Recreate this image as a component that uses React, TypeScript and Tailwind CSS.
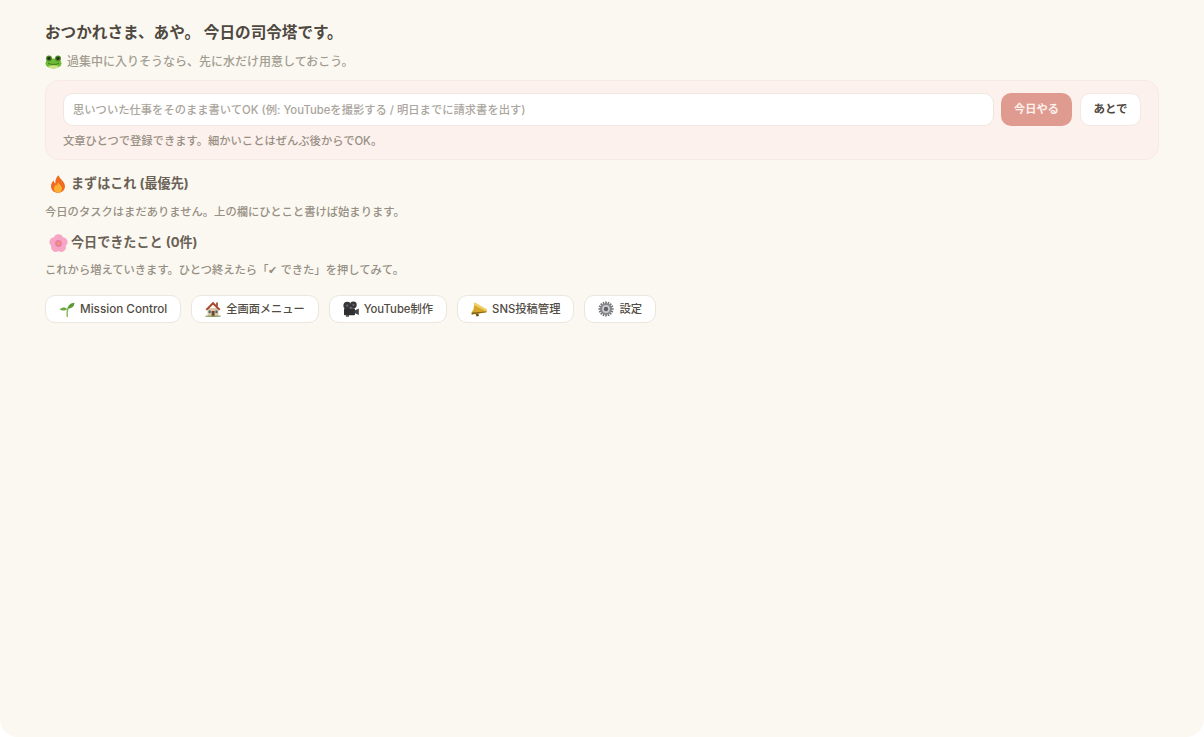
const sans = "font-['Inter','Noto_Sans_CJK_JP',sans-serif]";

function Sprout() {
  return (
    <svg width="16" height="16" viewBox="0 0 16 16" className="shrink-0">
      <path d="M8.3 15.5C8 12 8.2 9 9 7" stroke="#8dbb5c" strokeWidth="1.5" fill="none" strokeLinecap="round" />
      <path d="M8.8 7.5C9 4 11.5 2.2 15.5 1.8 15.2 5.6 12.5 7.8 8.8 7.5Z" fill="#5c9a36" />
      <path d="M8.3 8.2C6.6 5.9 3.8 5.8.6 8 3 10.2 6 10 8.3 8.2Z" fill="#6aaa40" />
    </svg>
  );
}
function House() {
  return (
    <svg width="16" height="16" viewBox="0 0 16 16" className="shrink-0">
      <rect x="11" y="1.5" width="2" height="4" fill="#a0674b" />
      <rect x="2.6" y="7" width="10.8" height="8.5" fill="#dcc8a8" />
      <path d="M8 .8 .6 8.2 2 9.4 8 3.8l6 5.6 1.4-1.2L8 .8Z" fill="#a8472f" />
      <rect x="6.6" y="10" width="3" height="5.5" fill="#6f4630" />
      <rect x="3.6" y="9.5" width="2.2" height="2.6" fill="#54656e" />
      <rect x="10.4" y="9.5" width="2.2" height="2.6" fill="#54656e" />
      <rect x="0.5" y="14.6" width="15" height="1.2" fill="#7f9a58" />
    </svg>
  );
}
function Camera() {
  return (
    <svg width="16" height="16" viewBox="0 0 16 16" className="shrink-0">
      <circle cx="4.2" cy="4.6" r="3.8" fill="#38383b" />
      <circle cx="10.4" cy="3.9" r="3.3" fill="#38383b" />
      <circle cx="4.2" cy="4.6" r="1.2" fill="#66666a" />
      <circle cx="10.4" cy="3.9" r="1.1" fill="#66666a" />
      <rect x="1" y="7.2" width="11" height="7" rx="1" fill="#2f2f32" />
      <path d="M11.6 9.4 15.8 7.4V14L11.6 12Z" fill="#444448" />
      <rect x="3" y="14" width="3" height="1.8" fill="#55555a" />
    </svg>
  );
}
function Megaphone() {
  return (
    <svg width="16" height="16" viewBox="0 0 16 16" className="shrink-0">
      <path d="M3.6 1.6 15.8 8.6 15.4 11.2.6 13.6 1 11 2.6 8Z" fill="#d6a72a" />
      <path d="M3.6 1.6 15.8 8.6 14.6 10 3.4 4.2Z" fill="#f0d266" />
      <path d="M.6 11.6 15.4 10.4 15.4 11.2.6 13.6Z" fill="#8a6716" />
      <path d="M4.6 13 5.6 15.6 8 15 7.4 12.6Z" fill="#6f5314" />
    </svg>
  );
}
function Gear() {
  const teeth = Array.from({ length: 16 }, (_, i) => i * 22.5);
  return (
    <svg width="16" height="16" viewBox="0 0 16 16" className="shrink-0">
      {teeth.map((a) => (
        <rect key={a} x="7.2" y="0.4" width="1.6" height="3" fill="#77777c" transform={`rotate(${a} 8 8)`} />
      ))}
      <circle cx="8" cy="8" r="5.8" fill="#85858a" />
      <circle cx="8" cy="8" r="3.9" fill="#c9cbce" />
      <circle cx="8" cy="8" r="2.2" fill="#5f6166" />
    </svg>
  );
}
function Frog() {
  return (
    <svg width="17" height="14" viewBox="0 0 17 14" className="shrink-0">
      <ellipse cx="8.5" cy="8.4" rx="8" ry="5" fill="#6fbb35" />
      <circle cx="4" cy="3.4" r="3" fill="#4c8c2a" />
      <circle cx="13" cy="3.4" r="3" fill="#4c8c2a" />
      <circle cx="4" cy="3.4" r="1.7" fill="#24331a" />
      <circle cx="13" cy="3.4" r="1.7" fill="#24331a" />
      <path d="M3 8.4C6 9.8 11 9.8 14 8.4" stroke="#3f7a20" strokeWidth="1" fill="none" />
      <ellipse cx="8.5" cy="11.8" rx="5" ry="1.5" fill="#cfdf84" />
    </svg>
  );
}
function Fire() {
  return (
    <svg width="16" height="18" viewBox="0 0 16 18" className="shrink-0">
      <path d="M8.6.3C9.3 3.6 14.9 6.4 15 11.2 15 15 12 17.7 8 17.7S1 15 1 11.2C1 8.6 2.5 6.8 3.6 5.6 3.8 7 4.4 8 5.4 8.4 5.2 5.2 6.2 2 8.6.3Z" fill="#ef6b22" />
      <path d="M8.4 7.2C9 9.4 12 10.7 12 13.6 12 16 10.2 17.7 8 17.7S4 16 4 13.6C4 11.4 5.4 10.4 6 9.4 6.4 10 6.8 10.4 7.2 10.6 7.2 9.4 7.6 8 8.4 7.2Z" fill="#fbb034" />
    </svg>
  );
}
function Blossom() {
  const petals = [0, 72, 144, 216, 288];
  return (
    <svg width="19" height="19" viewBox="0 0 18 18" className="shrink-0">
      {petals.map((a) => (
        <ellipse key={a} cx="9" cy="4.7" rx="4.5" ry="4.5" fill="#f6a6c4" transform={`rotate(${a} 9 9)`} />
      ))}
      <circle cx="9" cy="9" r="3.2" fill="#ee7ba5" />
      <circle cx="9" cy="9" r="1.2" fill="#e2b04a" />
    </svg>
  );
}

const navs = [
  { icon: <Sprout />, label: "Mission Control", size: "text-[11.7px]" },
  { icon: <House />, label: "全画面メニュー", size: "text-[11.2px]" },
  { icon: <Camera />, label: "YouTube制作", size: "text-[11.3px]" },
  { icon: <Megaphone />, label: "SNS投稿管理", size: "text-[11.3px]" },
  { icon: <Gear />, label: "設定", size: "text-[11.3px]" },
];

export default function App() {
  return (
    <div className={`${sans} h-[737px] w-full overflow-hidden bg-white`}>
      <div className="h-full rounded-b-[18px] bg-[#fbf8f1] pl-[45px] pr-[45px] pt-[23px]">
        <h1 className="text-[15.6px] font-bold leading-[20px] text-[#4f4840]">おつかれさま、あや。 今日の司令塔です。</h1>
        <p className="mt-[10px] flex h-[18px] items-center gap-[5px] text-[12px] font-medium text-[#a29c90]">
          <Frog />
          <span>過集中に入りそうなら、先に水だけ用意しておこう。</span>
        </p>
        <section className="mt-[9px] h-[80px] rounded-[14px] border border-[#f8e9e3] bg-[#fdf1ed] pl-[17px] pr-[17px] pt-[12px]">
          <div className="flex items-stretch gap-[8px]">
            <input
              readOnly
              placeholder="思いついた仕事をそのまま書いてOK (例: YouTubeを撮影する / 明日までに請求書を出す)"
              className="-mr-px h-[33px] min-w-0 flex-1 rounded-[10px] border border-[#efe7df] bg-white px-[9px] text-[11.3px] font-medium text-[#4f4840] outline-none placeholder:text-[#aaa59d]"
            />
            <button className="h-[33px] w-[71px] rounded-[10px] bg-[#e09b90] text-[11.2px] font-bold text-[#fdf1ec]">今日やる</button>
            <button className="h-[33px] w-[61px] rounded-[10px] border border-[#f1e9e2] bg-white text-[11.5px] font-semibold text-[#4f4840]">あとで</button>
          </div>
          <p className="mt-[7px] text-[11.3px] font-medium leading-[16px] text-[#968f83]">文章ひとつで登録できます。細かいことはぜんぶ後からでOK。</p>
        </section>
        <h2 className="mt-[14px] flex h-[20px] items-center gap-[5px] pl-[5px] text-[13.1px] font-bold text-[#6a6156]">
          <Fire />
          <span>まずはこれ (最優先)</span>
        </h2>
        <p className="mt-[10px] text-[11.3px] font-medium leading-[16px] text-[#968f83]">今日のタスクはまだありません。上の欄にひとこと書けば始まります。</p>
        <h2 className="mt-[13px] flex h-[20px] items-center gap-[4px] pl-[4px] text-[13.1px] font-bold text-[#6a6156]">
          <Blossom />
          <span className="-ml-px">今日できたこと (0件)</span>
        </h2>
        <p className="mt-[9px] text-[11.3px] font-medium leading-[16px] text-[#968f83]">これから増えていきます。ひとつ終えたら「✔ できた」を押してみて。</p>
        <nav className="mt-[17px] flex gap-[10px]">
          {navs.map((n) => (
            <button
              key={n.label}
              className={`flex h-[28px] items-center gap-[5px] rounded-[10px] border border-[#ece6dd] bg-white px-[13px] font-medium text-[#524c44] ${n.size}`}
            >
              {n.icon}
              <span className="pt-px">{n.label}</span>
            </button>
          ))}
        </nav>
      </div>
    </div>
  );
}
